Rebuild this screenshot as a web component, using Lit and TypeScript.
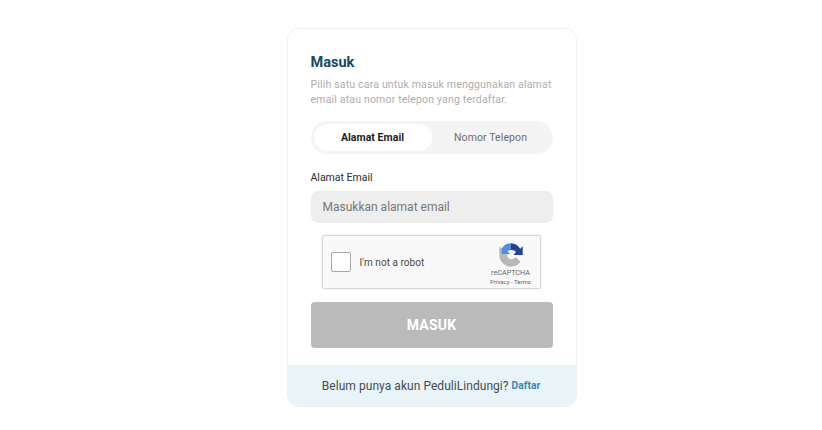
import { LitElement, html, css } from "lit";
import { customElement } from "lit/decorators.js";

@customElement("app-root")
export class AppRoot extends LitElement {
  static styles = css`
    :host { display: block; width: 822px; height: 430px; background: #fff; font-family: Roboto, "Liberation Sans", sans-serif; padding-top: 28px; box-sizing: border-box; overflow: hidden; }
    .card { box-sizing: border-box; width: 290px; height: 379px; margin: 0 0 0 287px; border: 1px solid #efefef; border-radius: 12px; display: flex; flex-direction: column; overflow: hidden; background: #fff; }
    .body { flex: 1; padding: 24px 23px 0 22.5px; display: flex; flex-direction: column; }
    h1 { margin: 0; font-size: 14.5px; line-height: 19px; font-weight: 700; color: #164a63; letter-spacing: 0; }
    .desc { margin: 6px 0 0; font-size: 10.5px; line-height: 14.5px; color: #aeaeae; letter-spacing: 0.18px; white-space: nowrap; }
    .tabs { margin-top: 14px; height: 33px; border-radius: 17px; background: #f4f4f4; display: flex; padding: 3px; box-sizing: border-box; width: 242px; }
    .tab { flex: 1; display: flex; align-items: center; justify-content: center; font-size: 10.5px; letter-spacing: 0.1px; color: #6d6d6d; border-radius: 14px; }
    .tab.on { flex: 0 0 118px; background: #fff; color: #1c1c1c; font-weight: 700; letter-spacing: 0.05px; }
    label { margin-top: 16px; font-size: 10.5px; line-height: 16px; color: #2c2c2c; letter-spacing: 0; }
    .input { margin-top: 5px; width: 242px; height: 32px; box-sizing: border-box; background: #eeeeee; border-radius: 7px; padding-left: 12px; display: flex; align-items: center; font-size: 12px; letter-spacing: 0; color: #777; }
    .captcha { box-sizing: border-box; margin: 12px 0 0 11px; width: 219px; height: 54px; background: #f9f9f9; border: 1px solid #d6d6d6; border-radius: 2px; box-shadow: 0 0 3px rgba(0,0,0,.08); display: flex; align-items: center; padding-left: 8px; position: relative; }
    .check { width: 20px; height: 20px; box-sizing: border-box; background: #fff; border: 1.5px solid #a8a8a8; border-radius: 2px; }
    .robot { margin-left: 9px; font-size: 10px; letter-spacing: 0.05px; color: #4a4a4a; }
    .rc { position: absolute; right: 7px; top: 7px; width: 44px; display: flex; flex-direction: column; align-items: center; }
    .rc svg { width: 24px; height: 24px; }
    .rc .t1 { font-size: 7.2px; line-height: 9px; margin-top: 1px; color: #666; }
    .rc .t2 { font-size: 6px; line-height: 9px; margin-top: 0; color: #666; white-space: nowrap; }
    .btn { margin-top: 13px; width: 242px; height: 46px; border-radius: 4px; background: #bababa; color: #fff; font-weight: 700; font-size: 14px; letter-spacing: 0.2px; display: flex; align-items: center; justify-content: center; }
    .foot { height: 41px; background: #e9f4f8; display: flex; align-items: center; justify-content: center; font-size: 12px; letter-spacing: 0.05px; color: #454c50; gap: 3px; padding-right: 2px; }
    .foot b { font-size: 10.2px; font-weight: 700; color: #2f8bb3; }
  `;

  render() {
    return html`
      <div class="card">
        <div class="body">
          <h1>Masuk</h1>
          <p class="desc">Pilih satu cara untuk masuk menggunakan alamat<br />email atau nomor telepon yang terdaftar.</p>
          <div class="tabs">
            <div class="tab on">Alamat Email</div>
            <div class="tab off">Nomor Telepon</div>
          </div>
          <label>Alamat Email</label>
          <div class="input">Masukkan alamat email</div>
          <div class="captcha">
            <div class="check"></div>
            <div class="robot">I'm not a robot</div>
            <div class="rc">
              <svg viewBox="0 0 24 24">
                <path fill="#b8b8b8" d="M2.600 5.600 L0.300 3.300 V12 A11.700 11.700 0 0 0 12 23.700 A11.700 11.700 0 0 0 21.500 18.800 L16.800 14 A5 5 0 0 1 8 13 L9.500 9 H5.500 Z"/>
                <path fill="#4d8fe6" d="M2.600 5.600 A11.700 11.700 0 0 1 12 .3 V7 A5.500 5.500 0 0 0 8.500 8.300 L11.200 11 H2.800 Z"/>
                <path fill="#22409f" d="M12 .3 A11.700 11.700 0 0 1 21.200 5.800 L23.700 3.300 V12 H14.500 L17 9 A5.500 5.500 0 0 0 12 7 Z"/>
              </svg>
              <div class="t1">reCAPTCHA</div>
              <div class="t2">Privacy - Terms</div>
            </div>
          </div>
          <div class="btn">MASUK</div>
        </div>
        <div class="foot"><span>Belum punya akun PeduliLindungi?</span><b>Daftar</b></div>
      </div>
    `;
  }
}
